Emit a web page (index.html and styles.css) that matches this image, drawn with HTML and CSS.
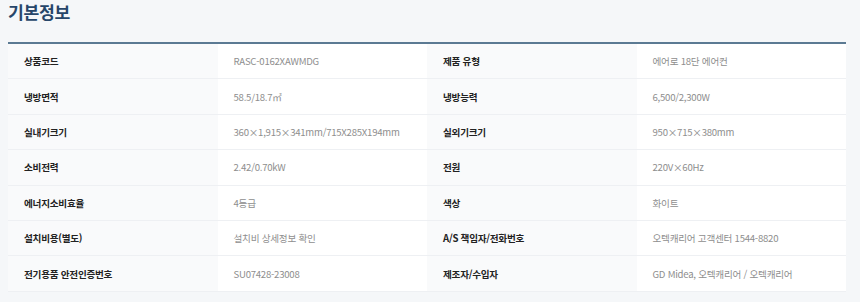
FILE: index.html
```html
<!DOCTYPE html>
<html lang="ko">
<head>
<meta charset="utf-8">
<title>기본정보</title>
<link rel="stylesheet" href="styles.css">
</head>
<body>
<section class="info">
  <h2 class="info-title">기본정보</h2>
  <table class="spec">
    <tbody>
      <tr><th>상품코드</th><td>RASC-0162XAWMDG</td><th>제품 유형</th><td>에어로 18단 에어컨</td></tr>
      <tr><th>냉방면적</th><td>58.5/18.7㎡</td><th>냉방능력</th><td>6,500/2,300W</td></tr>
      <tr><th>실내기크기</th><td>360×1,915×341mm/715X285X194mm</td><th>실외기크기</th><td>950×715×380mm</td></tr>
      <tr><th>소비전력</th><td>2.42/0.70kW</td><th>전원</th><td>220V×60Hz</td></tr>
      <tr><th>에너지소비효율</th><td>4등급</td><th>색상</th><td>화이트</td></tr>
      <tr><th>설치비용(별도)</th><td>설치비 상세정보 확인</td><th>A/S 책임자/전화번호</th><td>오텍캐리어 고객센터 1544-8820</td></tr>
      <tr><th>전기용품 안전인증번호</th><td>SU07428-23008</td><th>제조자/수입자</th><td>GD Midea, 오텍캐리어 / 오텍캐리어</td></tr>
    </tbody>
  </table>
</section>
</body>
</html>
```
FILE: styles.css
```css
html, body {
  margin: 0;
  padding: 0;
  background: #f5f7f9;
}
body {
  font-family: "Noto Sans CJK KR", "Noto Sans", sans-serif;
  color: #222;
}
.info {
  padding: 0 14px 0 8px;
}
.info-title {
  margin: 0;
  padding-top: 1px;
  height: 41px;
  font-size: 17.2px;
  line-height: 22px;
  font-weight: 700;
  color: #27466a;
  letter-spacing: -0.3px;
}
.spec {
  width: 100%;
  border-collapse: collapse;
  table-layout: fixed;
  border-top: 2px solid #5b7a93;
}
.spec th,
.spec td {
  height: 34.4px;
  padding: 0 16px;
  font-size: 9.6px;
  line-height: 14px;
  text-align: left;
  vertical-align: middle;
  border-bottom: 1px solid #eef0f3;
  letter-spacing: -0.25px;
}
.spec th {
  background: #f9fafb;
  font-weight: 700;
  color: #222;
}
.spec td {
  background: #fff;
  font-weight: 400;
  color: #8e8e8e;
}
```
